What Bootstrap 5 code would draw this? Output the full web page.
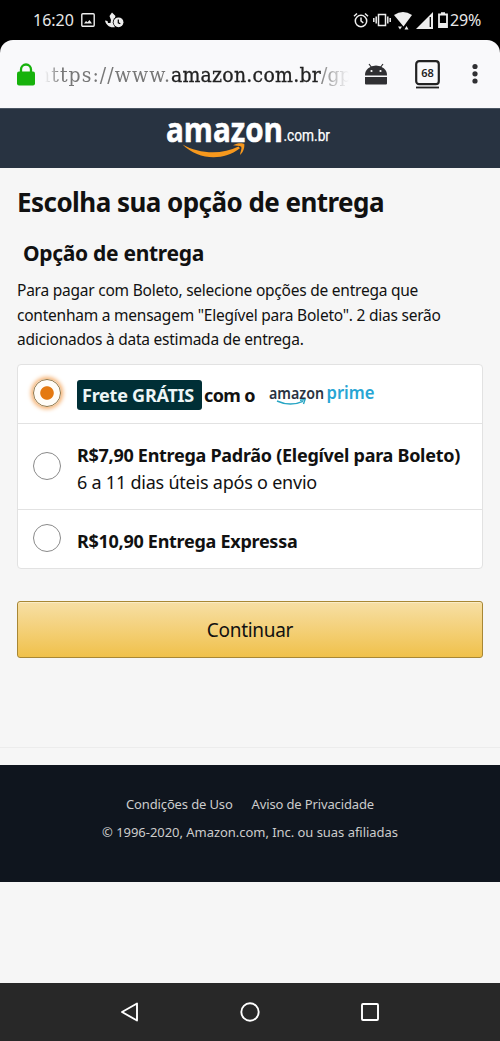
<!DOCTYPE html>
<html lang="pt-BR">
<head>
<meta charset="utf-8">
<meta name="viewport" content="width=device-width, initial-scale=1">
<title>Escolha sua opção de entrega</title>
<link href="https://cdn.jsdelivr.net/npm/bootstrap@5.3.0/dist/css/bootstrap.min.css" rel="stylesheet">
<style>
body{font-family:"Noto Sans",sans-serif;background:#f6f6f6;color:#111;width:500px;height:1041px;overflow:hidden}
svg{display:block;flex:none;overflow:visible}
.t{white-space:nowrap;display:inline-block}
.status{height:40px;background:#000;color:#e8e8e8;font-size:16px;padding:0 19px 0 33px}
.icon-image{margin-left:7px}
.icon-app{margin-left:10px}
.icon-vibrate,.icon-signal{margin-left:4px}
.icon-wifi{margin-left:3px}
.icon-battery{margin-left:5px}
.charge{margin-left:2px;letter-spacing:-.2px}
.chrome-wrap{background:#000}
.chrome{height:68px;background:#f9f9fb;border-radius:13px 13px 0 0;padding:0 17px}
.url{font-family:"DejaVu Serif Condensed","DejaVu Serif",serif;font-size:21px;color:#777;width:311px;height:34px;line-height:36px;white-space:nowrap;margin-left:3px;-webkit-mask-image:linear-gradient(90deg,transparent 7px,#000 22px,#000 280px,transparent 311px);mask-image:linear-gradient(90deg,transparent 7px,#000 22px,#000 280px,transparent 311px)}
.url .scheme{letter-spacing:1.06px}
.url .host{font-weight:400;color:#222;letter-spacing:.24px;-webkit-text-stroke:.3px #222}
.icon-robot{margin-left:16px}
.icon-tabs{margin-left:28px}
.icon-more{margin-left:32px}
.brand{height:60px;background:#283341;border-top:1px solid #4b5663}
.brand svg{margin-right:4px}
.content-area{padding:0 17px;height:580px;border-bottom:1px solid #ececec}
h1{font-size:26px;font-weight:700;line-height:36px;margin:0;padding-top:16px;letter-spacing:-.546px}
h2{font-size:21px;font-weight:700;line-height:30px;margin:0;padding:18px 0 0 6px;letter-spacing:-.3px}
.intro{font-size:15.5px;line-height:24.5px;margin:10px 0 12.5px;letter-spacing:-.232px}
.options{background:#fff;border:1px solid #e2e2e2;border-radius:4px}
.options .list-group-item{border-color:#e2e2e2;padding:0 0 0 15px;background:none;color:#111}
.row-a{height:59px}.row-b{height:86px}.row-c{height:58px}
.radio{width:28px;height:28px;border:1.5px solid #8a8a8a;border-radius:50%;background:#fff;margin:0 16px 2px 0;flex:none}
.radio.on{border-color:#8f7547;background:radial-gradient(circle,#e47911 0 6.3px,#fffdf8 7.2px);box-shadow:0 0 4px 2px #f5b06f}
.opt{font-size:18px;line-height:27px;font-weight:700;padding-top:4px;letter-spacing:-.28px}
.opt .fw-normal{letter-spacing:-.225px}
.row-a .opt{padding-top:2px}
.free{background:#002f36;color:#eef6f6;border-radius:3px;height:30px;line-height:30px;padding:0 5px;width:125px;margin-right:2px;letter-spacing:-.242px}
.with{letter-spacing:-.6px;padding-top:1px}
.prime{margin:-2px 0 0 13px}
.go.btn{height:57px;margin-top:31.5px;border:1px solid #a88734;border-radius:3px;background:linear-gradient(#f7dfa5,#f0c14b);font-size:19px;line-height:57px;color:#111;box-shadow:inset 0 1px 0 #fbecc6;letter-spacing:-.3px}
.foot{margin-top:17px;height:117px;background:#0f151e;color:#ccc;font-size:13px;line-height:20px;padding-top:29px;letter-spacing:-.04px}
.foot .links{gap:19px;letter-spacing:-.14px}
.nav-keys{height:58px;background:#282828;margin-top:101px}
</style>
</head>
<body>
<div class="status d-flex align-items-center">
  <span class="t">16:20</span>
  <svg class="icon-image" width="14" height="14" viewBox="0 0 14 14" fill="none" stroke="#eee" stroke-width="1.4"><rect x=".8" y=".8" width="12.4" height="12.4" rx="1"/><path d="M3 10.500 5 8l1.500 1.300L8.500 7l2.500 3.500z" fill="#eee" stroke="none"/></svg>
  <svg class="icon-app" width="20" height="17" viewBox="0 0 20 17"><path d="M4.500 4 7 .5 10.500 4 9 8.500l1.500 6.500C5 16.500 1 13 0 8.500l2.500.5L3 11h2.500L6 8z" fill="#eee"/><circle cx="13.500" cy="10.300" r="5.700" fill="#000"/><circle cx="13.500" cy="10.300" r="4.900" fill="#eee"/><path d="M13.300 7.500v3.300l2 1" fill="none" stroke="#000" stroke-width="1.200"/></svg>
  <svg class="ms-auto" width="16" height="16" viewBox="0 0 16 16" fill="none" stroke="#eee" stroke-width="1.500"><circle cx="8" cy="9" r="5.700"/><path d="M8 5.500V9l2.300 1.800M1 4.200 4 1.500M15 4.200l-3-2.700"/></svg>
  <svg class="icon-vibrate" width="18" height="14" viewBox="0 0 18 14" fill="none" stroke="#eee" stroke-width="1.500"><rect x="5.500" y="1.500" width="7" height="11"/><path d="M3.200 3.500v7M.8 5v4M14.800 3.500v7M17.200 5v4"/></svg>
  <svg class="icon-wifi" width="18" height="19" viewBox="0 0 18 19" fill="#eee"><path d="M0 4Q9-2 18 4L9.500 15.500z"/><path d="M4 15.500h4l-2 3zM10.500 18.500l2-3.500 2 3.500z"/></svg>
  <svg class="icon-signal" width="17" height="17" viewBox="0 0 17 17"><path d="M17 0v17H0z" fill="#eee"/><path d="M14.300 5v10" stroke="#000" stroke-width="1.300"/></svg>
  <svg class="icon-battery" width="10" height="16" viewBox="0 0 10 16"><path d="M1 2.500h8V15H1zM3 1.200h4" fill="none" stroke="#eee" stroke-width="1.800"/><path d="M1 11h8v4H1z" fill="#eee"/></svg>
  <span class="t charge">29%</span>
</div>
<div class="chrome-wrap"><div class="chrome d-flex align-items-center">
  <svg width="18" height="23" viewBox="0 0 18 23"><rect y="8.500" width="18" height="14" rx="2" fill="#17b20c"/><path d="M4 10V6.500a5 5 0 0 1 10 0V10" fill="none" stroke="#17b20c" stroke-width="2.300"/></svg>
  <div class="url"><span class="scheme">https://www.</span><span class="host">amazon.com.br</span><span>/gp</span></div>
  <svg class="icon-robot" width="22" height="22" viewBox="0 0 22 22" fill="#303033"><path d="M0 12.500V12a11 9.500 0 0 1 22 0v.5zM0 14h22v6.500q0 1-1 1H1q-1 0-1-1z"/><path d="m4 1 3 4M18 1l-3 4" stroke="#303033" stroke-width="1.200"/><circle cx="6.500" cy="8" r="1.100" fill="#fff"/><circle cx="15.500" cy="8" r="1.100" fill="#fff"/></svg>
  <svg class="icon-tabs" width="25" height="29" viewBox="0 0 25 29"><rect x="1.200" y="1.200" width="22.600" height="23" rx="3" fill="none" stroke="#222" stroke-width="2.200"/><path d="M1 27.500h23" stroke="#222" stroke-width="1.800"/><text x="6.300" y="16.500" font-family="Noto Sans" font-weight="600" font-size="11" textLength="12.400" fill="#222">68</text></svg>
  <svg class="icon-more" width="6" height="22" viewBox="0 0 6 22" fill="#303033"><circle cx="3" cy="3.500" r="2.600"/><circle cx="3" cy="10.800" r="2.600"/><circle cx="3" cy="18" r="2.600"/></svg>
</div></div>
<div class="brand d-flex justify-content-center">
  <svg width="170" height="59" viewBox="163 109 170 59"><text x="166" y="141.500" font-family="Open Sans" font-weight="700" font-size="34" textLength="117" lengthAdjust="spacingAndGlyphs" fill="#fff" stroke="#fff" stroke-width=".6">amazon</text><text x="283.500" y="141" font-family="Roboto" font-size="17" textLength="46.500" lengthAdjust="spacingAndGlyphs" fill="#fff" stroke="#fff" stroke-width=".25">.com.br</text><path d="M182.500 144.500C199 154 222 155 238.500 146.500l1.500 1.800C223 161.500 198 160 182.500 144.500z" fill="#f7981d"/><path d="M233 145.300c4-2.500 9.500-2.500 11.300-1.300 .5 4-1.500 9-4.300 11 .3-3 2-6 1.300-8.300-2.300-1-5.300-.8-8.300-1.400z" fill="#f7981d"/></svg>
</div>
<main class="content-area">
  <h1 class="text-nowrap">Escolha sua opção de entrega</h1>
  <h2 class="text-nowrap">Opção de entrega</h2>
  <p class="intro text-nowrap">Para pagar com Boleto, selecione opções de entrega que<br>contenham a mensagem "Elegível para Boleto". 2 dias serão<br>adicionados à data estimada de entrega.</p>
  <div class="options list-group list-group-flush">
    <div class="list-group-item row-a d-flex align-items-center"><span class="radio on"></span><div class="opt d-flex align-items-center"><span class="free t">Frete GRÁTIS</span><span class="t with">com o</span>
      <svg class="prime" width="107" height="24" viewBox="268 382 107 24"><text x="269" y="399" font-family="Noto Sans" font-weight="600" font-size="15.500" letter-spacing="0" textLength="55" lengthAdjust="spacingAndGlyphs" fill="#2a3342">amazon</text><text x="326.500" y="399" font-family="Noto Sans" font-weight="600" font-size="17" letter-spacing="0" textLength="48" lengthAdjust="spacingAndGlyphs" fill="#27a5d4">prime</text><path d="M277 401q13 6 26 .3M300 400.200l5-.7-1.500 4.500" fill="none" stroke="#27a5c4" stroke-width="1.400"/></svg></div></div>
    <div class="list-group-item row-b d-flex align-items-center"><span class="radio"></span><div class="opt text-nowrap"><div>R$7,90 Entrega Padrão (Elegível para Boleto)</div><div class="fw-normal">6 a 11 dias úteis após o envio</div></div></div>
    <div class="list-group-item row-c d-flex align-items-center"><span class="radio"></span><div class="opt text-nowrap">R$10,90 Entrega Expressa</div></div>
  </div>
  <button type="button" class="go btn w-100 p-0">Continuar</button>
</main>
<footer class="foot text-center"><div class="links d-flex justify-content-center"><span>Condições de Uso</span><span>Aviso de Privacidade</span></div><div class="mt-2">© 1996-2020, Amazon.com, Inc. ou suas afiliadas</div></footer>
<div class="nav-keys"><svg width="500" height="58" viewBox="0 983 500 58" fill="none" stroke="#fff" stroke-width="1.900" stroke-linejoin="round"><path d="M122 1012l15-8.500v17z"/><circle cx="250" cy="1012" r="8.700"/><rect x="362" y="1004" width="16" height="16" rx="1"/></svg></div>
<script src="https://cdn.jsdelivr.net/npm/bootstrap@5.3.0/dist/js/bootstrap.bundle.min.js"></script>
</body>
</html>
